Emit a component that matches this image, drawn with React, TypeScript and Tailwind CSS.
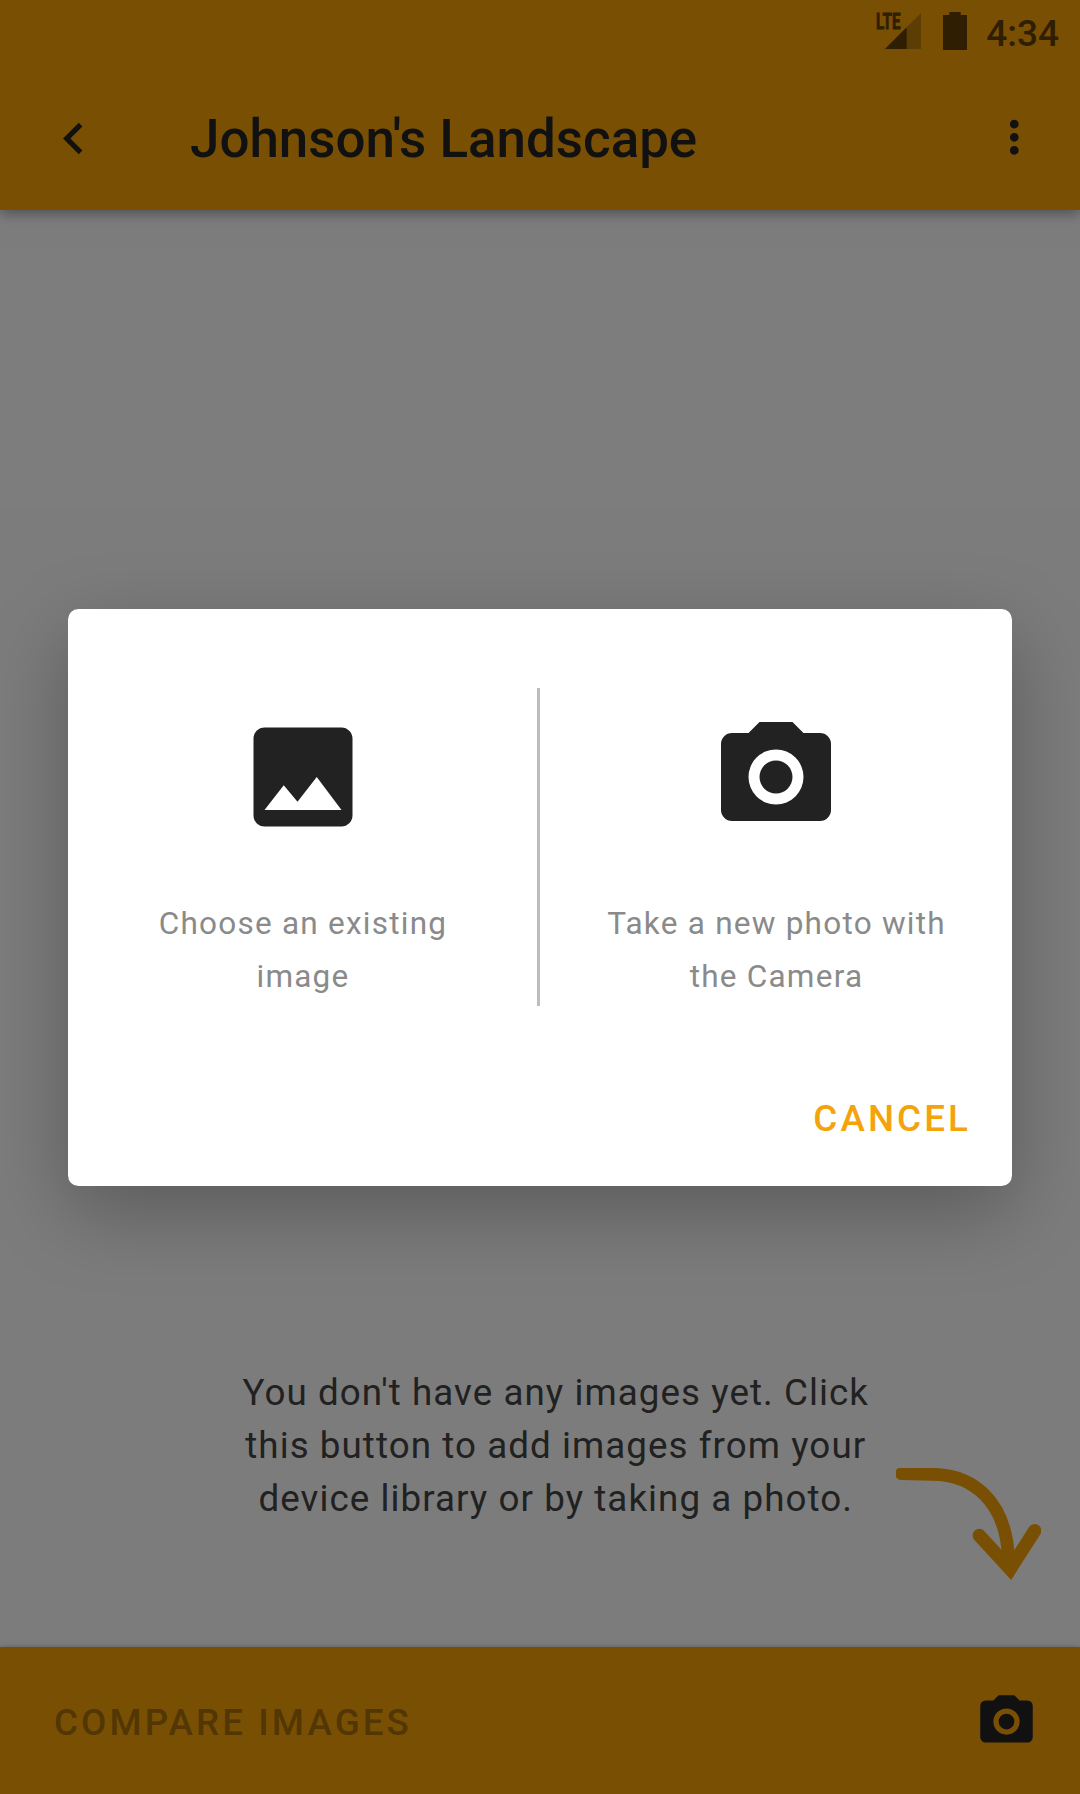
import React from "react";

const CAMERA =
  "M4 4H7L9 2H15L17 4H20A2 2 0 0 1 22 6V18A2 2 0 0 1 20 20H4A2 2 0 0 1 2 18V6A2 2 0 0 1 4 4M12 7A5 5 0 0 0 7 12A5 5 0 0 0 12 17A5 5 0 0 0 17 12A5 5 0 0 0 12 7M12 9A3 3 0 0 1 15 12A3 3 0 0 1 12 15A3 3 0 0 1 9 12A3 3 0 0 1 12 9Z";
const IMAGE =
  "M21 19V5c0-1.1-.9-2-2-2H5c-1.1 0-2 .9-2 2v14c0 1.1.9 2 2 2h14c1.1 0 2-.9 2-2zM8.5 13.5l2.5 3.01L14.5 12l4.5 6H5l3.5-4.5z";
const CHEVRON = "M15.41 7.41L14 6l-6 6 6 6 1.41-1.41L10.83 12z";
const MORE =
  "M12 8c1.1 0 2-.9 2-2s-.9-2-2-2-2 .9-2 2 .9 2 2 2zm0 2c-1.1 0-2 .9-2 2s.9 2 2 2 2-.9 2-2-.9-2-2-2zm0 6c-1.1 0-2 .9-2 2s.9 2 2 2 2-.9 2-2-.9-2-2-2z";

function Icon({ d, className }: { d: string; className: string }) {
  return (
    <svg viewBox="0 0 24 24" fill="currentColor" className={className}>
      <path d={d} />
    </svg>
  );
}

function StatusBar() {
  return (
    <div className="flex h-[63px] justify-end pr-[21px] text-[#5e3c04]">
      <div className="relative mt-[13px] h-[36px] w-[46px]">
        <svg viewBox="0 0 46 36" className="h-[36px] w-[46px]">
          <path d="M46 0V36H10Z" fill="#b87a06" />
          <path d="M31.7 14.3V36H10Z" fill="#5e3c04" />
        </svg>
        <span className="absolute top-0 left-px origin-left scale-x-[0.69] text-[22px] leading-[17px] font-bold [-webkit-text-stroke:0.8px_#5e3c04]">
          LTE
        </span>
      </div>
      <svg viewBox="0 0 24 38" className="mt-[12px] ml-[22px] h-[38px] w-[24px]">
        <path d="M6.3 0H17.7V3H24V38H0V3H6.3Z" fill="#5e3c04" />
      </svg>
      <span className="mt-[12px] ml-[19px] text-[37px] leading-[43px] font-medium whitespace-nowrap">4:34</span>
    </div>
  );
}

function Header() {
  return (
    <header className="z-10 h-[210px] bg-[#f3a106] shadow-[0_4px_12px_rgba(0,0,0,0.35)]">
      <StatusBar />
      <div className="flex h-[147px] items-center pr-[40px] pl-[42px] text-[#222]">
        <button className="mt-1">
          <Icon d={CHEVRON} className="size-[63px]" />
        </button>
        <h1 className="mt-[5px] ml-[85px] flex-1 text-[52.9px] leading-[62px] font-medium whitespace-nowrap">
          Johnson's Landscape
        </h1>
        <Icon d={MORE} className="mt-px size-[52.5px]" />
      </div>
    </header>
  );
}

function EmptyState() {
  return (
    <main className="flex flex-1 items-end justify-end pr-[39px] pb-[67px]">
      <p className="mr-[27px] mb-[55px] text-center text-[36.75px] leading-[53px] tracking-[1.06px] whitespace-nowrap text-[#424242]">
        You don't have any images yet. Click
        <br />
        this button to add images from your
        <br />
        device library or by taking a photo.
      </p>
      <svg
        viewBox="0 0 145 112"
        className="h-[112px] w-[145px]"
        fill="none"
        stroke="#f3a106"
        strokeWidth="13.4"
        strokeLinecap="round"
      >
        <path d="M5.5 5.7L36 6.3C78 6.5 110 34 112.5 90" strokeWidth="12.8" />
        <path d="M83.3 67.5L114.2 101L138.7 62.7" />
        <path d="M105.7 82H118.7V96H105.7Z" fill="#f3a106" stroke="none" />
      </svg>
    </main>
  );
}

function Footer() {
  return (
    <footer className="flex h-[147px] items-center justify-between bg-[#f3a106] pr-[42px] pl-[54px] shadow-[0_0_5px_rgba(0,0,0,0.25)]">
      <span className="mt-[4px] text-[36.75px] leading-[43px] font-medium tracking-[3.1px] text-[#a56c06]">COMPARE IMAGES</span>
      <Icon d={CAMERA} className="mt-px size-[63px] text-[#222]" />
    </footer>
  );
}

function Option({ icon, lines }: { icon: string; lines: [string, string] }) {
  return (
    <button className="flex flex-1 flex-col items-center pt-[23px]">
      <Icon d={icon} className="size-[132px] text-[#222]" />
      <span className="mt-[54px] pl-px text-center text-[31.5px] leading-[53px] tracking-[1.24px] whitespace-nowrap text-[#8a8a8a]">
        {lines[0]}
        <br />
        {lines[1]}
      </span>
    </button>
  );
}

function Dialog() {
  return (
    <div className="absolute inset-0 z-20 flex flex-col items-center bg-black/50 pt-[609px]">
      <div
        role="dialog"
        className="flex h-[577px] w-[944px] flex-col rounded-[10.5px] bg-white pt-[79px] shadow-[0_26px_80px_rgba(0,0,0,0.27)]"
      >
        <div className="flex h-[318px]">
          <div className="flex w-[469px]">
            <Option icon={IMAGE} lines={["Choose an existing", "image"]} />
          </div>
          <div className="w-[3px] bg-[#bdbdbd]" />
          <Option icon={CAMERA} lines={["Take a new photo with", "the Camera"]} />
        </div>
        <button className="mt-[91px] mr-[41px] self-end text-[36.75px] leading-[43px] font-medium tracking-[3.1px] text-[#f3a30b]">
          CANCEL
        </button>
      </div>
    </div>
  );
}

export default function App() {
  return (
    <div className="relative flex h-[1794px] w-[1080px] flex-col overflow-hidden bg-[#f9f9f9] font-['Roboto',sans-serif]">
      <Header />
      <EmptyState />
      <Footer />
      <Dialog />
    </div>
  );
}
